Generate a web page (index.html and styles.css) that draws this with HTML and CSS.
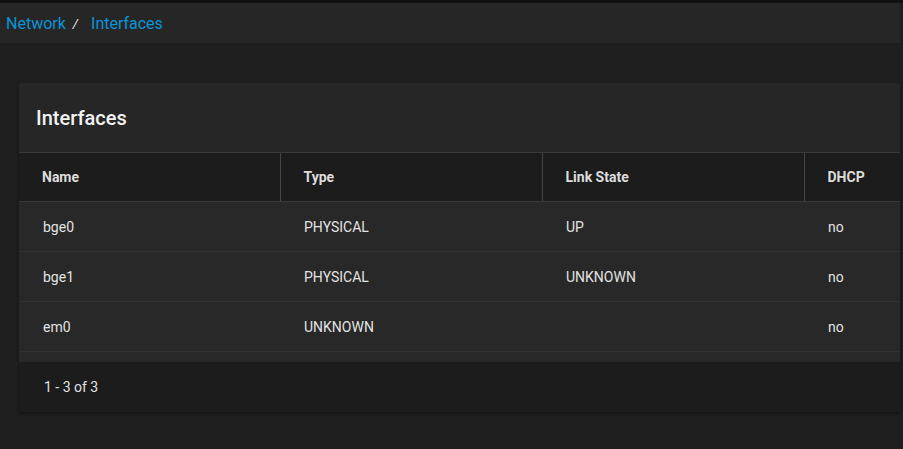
FILE: index.html
```html
<!DOCTYPE html>
<html>
<head>
<meta charset="utf-8">
<link rel="stylesheet" href="styles.css">
</head>
<body>
<div class="topline"></div>
<div class="app">
  <header class="crumbs">
    <a class="crumb">Network</a>
    <span class="sep">/</span>
    <a class="crumb">Interfaces</a>
  </header>
  <main class="content">
    <section class="card">
      <div class="card-head">Interfaces</div>
      <table class="grid">
        <colgroup>
          <col class="c1"><col class="c2"><col class="c3"><col class="c4">
        </colgroup>
        <thead>
          <tr><th>Name</th><th>Type</th><th>Link State</th><th>DHCP</th></tr>
        </thead>
        <tbody>
          <tr><td>bge0</td><td>PHYSICAL</td><td>UP</td><td>no</td></tr>
          <tr><td>bge1</td><td>PHYSICAL</td><td>UNKNOWN</td><td>no</td></tr>
          <tr><td>em0</td><td>UNKNOWN</td><td></td><td>no</td></tr>
        </tbody>
      </table>
      <div class="spacer"></div>
      <div class="card-foot">1 - 3 of 3</div>
    </section>
  </main>
</div>
</body>
</html>
```
FILE: styles.css
```css
html, body {
  margin: 0;
  padding: 0;
  background: #1e1e1e;
  font-family: Roboto, "Liberation Sans", sans-serif;
  height: 100%;
  overflow: hidden;
}
.topline {
  height: 3px;
  background: #111111;
}
.app {
  margin-right: 3px;
}
.crumbs {
  height: 40px;
  background: #262626;
  display: flex;
  align-items: center;
  padding-left: 6px;
  font-size: 16px;
  box-sizing: border-box;
}
.crumb {
  color: #0a95d6;
}
.sep {
  color: #e8e8e8;
  font-size: 13px;
  font-style: italic;
  margin: 0 13px 0 7px;
}
.content {
  padding: 40px 0 0 19px;
}
.card {
  background: #282828;
  border-radius: 4px 4px 0 0;
  overflow: hidden;
  box-shadow: 0 2px 3px rgba(0,0,0,0.35);
}
.card-head {
  height: 69px;
  background: #262626;
  display: flex;
  align-items: center;
  padding-left: 17px;
  font-size: 20px;
  font-weight: 500;
  color: #f2f2f2;
  border-bottom: 1px solid #3a3a3a;
}
.grid {
  width: 100%;
  border-collapse: collapse;
  table-layout: fixed;
  font-size: 14px;
}
.c1 { width: 261px; }
.c2 { width: 262px; }
.c3 { width: 262px; }
.grid th {
  height: 48px;
  padding: 0 0 0 23px;
  text-align: left;
  font-weight: 700;
  color: #dcdcdc;
  background: #1c1c1c;
  border-bottom: 1px solid #3a3a3a;
  border-left: 1px solid #474747;
}
.grid th:first-child {
  border-left: none;
}
.grid td {
  height: 49px;
  padding: 0 0 0 24px;
  color: #e2e2e2;
  background: #282828;
  border-bottom: 1px solid #323232;
}
.grid td:first-child {
  padding-left: 24px;
}
.spacer {
  height: 10px;
  background: #282828;
}
.card-foot {
  height: 50px;
  background: #1c1c1c;
  display: flex;
  align-items: center;
  padding-left: 25px;
  font-size: 14px;
  color: #e2e2e2;
}
```
